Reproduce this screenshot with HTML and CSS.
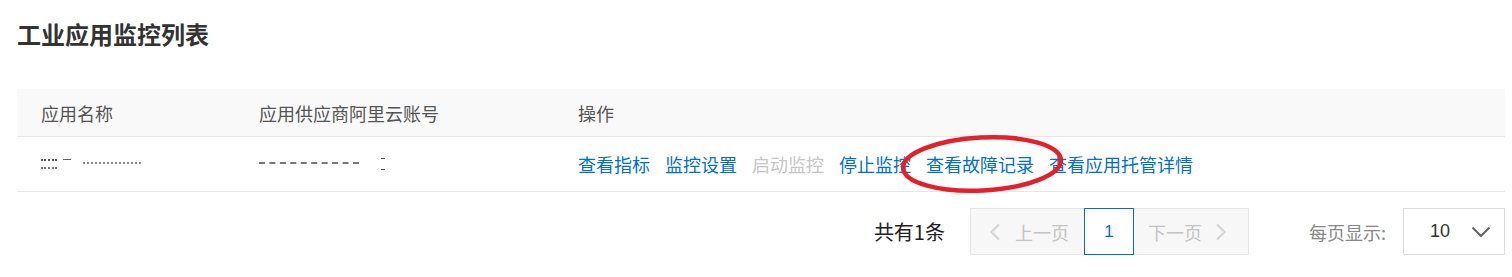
FILE: index.html
```html
<!DOCTYPE html>
<html lang="zh-CN">
<head>
    <meta charset="UTF-8">
    <title>工业应用监控列表</title>
    <link rel="stylesheet" href="styles.css">
</head>
<body>

    <h1 class="titre">工业应用监控列表</h1>

    <div class="tableau">
        <div class="ligne entete">
            <div class="cellule">应用名称</div>
            <div class="cellule">应用供应商阿里云账号</div>
            <div class="cellule">操作</div>
        </div>
        <div class="ligne">
            <div class="cellule">
                <span class="masque m1"></span>
                <span class="masque m2"></span>
                <span class="masque m3"></span>
            </div>
            <div class="cellule">
                <span class="masque m4"></span>
                <span class="masque m5"></span>
            </div>
            <div class="cellule actions">
                <a class="lien">查看指标</a>
                <a class="lien">监控设置</a>
                <a class="lien inactif">启动监控</a>
                <a class="lien">停止监控</a>
                <a class="lien marque">查看故障记录
                    <svg class="cercle" width="172" height="64" viewBox="0 0 172 64">
                        <ellipse cx="86" cy="32" rx="79" ry="26.5" transform="rotate(-3 86 32)" fill="none" stroke="#e5202b" stroke-width="4.5"/>
                    </svg>
                </a>
                <a class="lien">查看应用托管详情</a>
            </div>
        </div>
    </div>

    <div class="pied">
        <span class="total">共有1条</span>
        <div class="pages">
            <span class="page desactive">
                <svg width="12" height="18" viewBox="0 0 12 18"><path d="M10 1.5 L2.5 9 L10 16.5" fill="none" stroke="#d6d6d6" stroke-width="2.2"/></svg>
                上一页
            </span>
            <span class="page courante">1</span>
            <span class="page desactive suivant">
                下一页
                <svg width="12" height="18" viewBox="0 0 12 18"><path d="M2 1.5 L9.5 9 L2 16.5" fill="none" stroke="#d6d6d6" stroke-width="2.2"/></svg>
            </span>
        </div>
        <span class="par-page">每页显示:</span>
        <div class="choix">
            <span>10</span>
            <svg width="20" height="12" viewBox="0 0 20 12"><path d="M1.5 1.5 L10 10 L18.5 1.5" fill="none" stroke="#666" stroke-width="2"/></svg>
        </div>
    </div>

</body>
</html>
```

FILE: styles.css
```css
body {
    margin: 0;
    background-color: #fff;
    color: #333;
    font-family: "Noto Sans CJK SC", "Liberation Sans", sans-serif;
}
.titre {
    margin: 0;
    padding: 19px 0 0 17px;
    height: 89px;
    box-sizing: border-box;
    font-size: 24px;
    line-height: 30px;
    font-weight: bold;
    color: #333;
}
.tableau {
    margin-left: 17px;
    width: 1488px;
}
.ligne {
    display: grid;
    grid-template-columns: 218px 319px 1fr;
    height: 54px;
    align-items: center;
    border-bottom: 1px solid #e6e6e6;
    font-size: 18px;
}
.entete {
    height: 47px;
    background-color: #f9f9f9;
    color: #555;
}
.cellule {
    padding-left: 24px;
    display: flex;
    align-items: center;
    line-height: 24px;
}
.actions {
    gap: 15px;
}
.lien {
    color: #0070cc;
    white-space: nowrap;
}
.inactif {
    color: #c6c6c6;
}
.marque {
    position: relative;
}
.cercle {
    position: absolute;
    left: 50%;
    top: 50%;
    transform: translate(-84px, -32px);
    pointer-events: none;
}
.masque {
    display: inline-block;
    height: 2px;
}
.m1 {
    width: 16px;
    border-top: 2px dotted #555;
    border-bottom: 2px dotted #777;
    height: 6px;
    margin-right: 6px;
}
.m2 {
    width: 8px;
    border-top: 1px solid #666;
    margin-right: 12px;
    height: 10px;
}
.m3 {
    width: 58px;
    border-top: 2px dotted #888;
}
.m4 {
    width: 100px;
    border-top: 2px dashed #777;
    margin-right: 22px;
}
.m5 {
    width: 4px;
    height: 10px;
    border-top: 1px solid #555;
    border-bottom: 1px solid #555;
}
.pied {
    display: flex;
    justify-content: flex-end;
    align-items: center;
    margin-top: 16px;
    width: 1505px;
    font-size: 18px;
}
.total {
    color: #222;
    font-size: 20px;
    margin-right: 25px;
}
.pages {
    display: flex;
    height: 47px;
    border: 1px solid #e6e6e6;
    box-sizing: border-box;
    background-color: #f7f7f7;
    margin-right: 60px;
}
.page {
    display: flex;
    align-items: center;
    gap: 14px;
    color: #c3c3c3;
    white-space: nowrap;
}
.desactive {
    padding: 0 0 0 18px;
    width: 113px;
    box-sizing: border-box;
}
.suivant {
    padding: 0 0 0 14px;
    width: 114px;
    gap: 13px;
}
.courante {
    width: 48px;
    justify-content: center;
    margin: -1px 0;
    border: 1px solid #0070cc;
    background-color: #fff;
    color: #0070cc;
    font-family: "Liberation Sans", sans-serif;
    font-size: 17px;
}
.par-page {
    color: #888;
    margin-right: 17px;
}
.choix {
    display: flex;
    align-items: center;
    justify-content: space-between;
    width: 102px;
    height: 47px;
    box-sizing: border-box;
    padding: 0 13px 0 26px;
    border: 1px solid #dcdcdc;
    color: #333;
    font-family: "Liberation Sans", sans-serif;
}
```
